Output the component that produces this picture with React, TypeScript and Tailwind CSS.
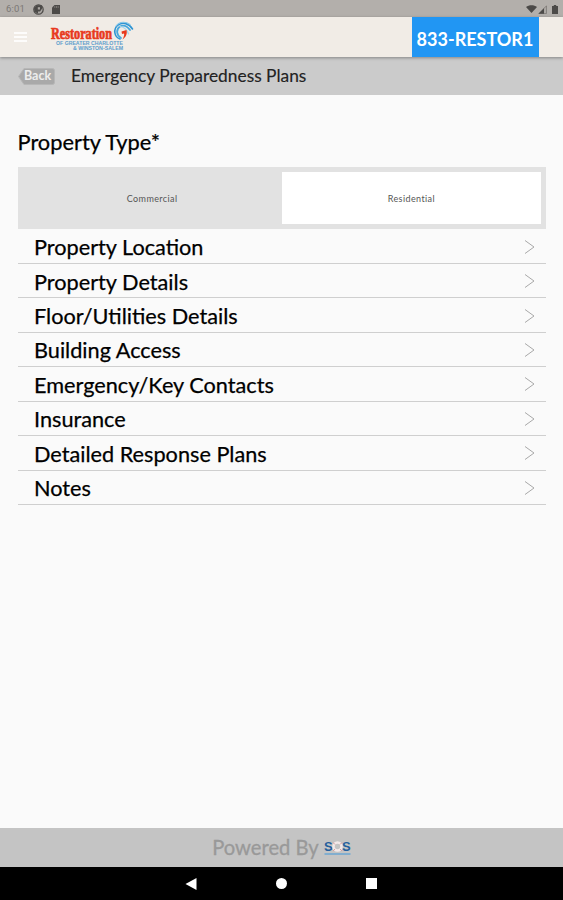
const sections = [
  "Property Location",
  "Property Details",
  "Floor/Utilities Details",
  "Building Access",
  "Emergency/Key Contacts",
  "Insurance",
  "Detailed Response Plans",
  "Notes",
]

function StatusBar() {
  return (
    <div className="flex h-[17px] shrink-0 items-center bg-[#b3afab] pt-[1px] pl-[6px] pr-[5px] text-[#4c4a48]">
      <span className="font-['Roboto',sans-serif] text-[9.5px] leading-none tracking-[0.2px] text-[#7b7875]">6:01</span>
      <svg className="ml-[8px]" width="11" height="11" viewBox="0 0 11 11">
        <circle cx="5.5" cy="5.5" r="4.7" fill="#aaa6a2" stroke="currentColor" strokeWidth="1.2" />
        <path d="M4 1.200h5v3.500L7 7.500H5V9.800L1.500 7.500L1 4z" fill="currentColor" />
        <path d="M4.800 3.200h2.200v2.300H4.800z" fill="#aaa6a2" />
      </svg>
      <svg className="ml-[8px]" width="8" height="9" viewBox="0 0 8 9">
        <path d="M2.5 0H8v9H0V2.5z" fill="currentColor" />
        <path d="M2.8 1.2v1.6M4.5 1.2v1.6M6.2 1.2v1.6" stroke="#98948f" strokeWidth="0.7" />
      </svg>
      <svg className="ml-auto" width="11" height="8" viewBox="0 0 11 8">
        <path d="M0 2C3-.5 8-.5 11 2L5.5 8z" fill="currentColor" />
      </svg>
      <svg className="ml-[1px]" width="9" height="9" viewBox="0 0 9 9">
        <path d="M8.5.8v7.7H.8z" fill="#aaa6a2" stroke="#6d6a67" strokeWidth="0.6" />
        <path d="M6 3.3v5.4H.5z" fill="currentColor" />
      </svg>
      <svg className="ml-[5px]" width="6" height="9" viewBox="0 0 6 9">
        <path d="M0 1h1.8V0h2.4v1H6v8H0z" fill="currentColor" />
      </svg>
    </div>
  )
}

function BrandLogo() {
  return (
    <svg className="ml-[22px]" width="86" height="32" viewBox="0 0 86 32">
      <text
        x="2"
        y="18"
        textLength="61"
        lengthAdjust="spacingAndGlyphs"
        fontFamily="Liberation Serif, serif"
        fontWeight="bold"
        fontSize="16"
        fill="#e8391d"
        stroke="#e8391d"
        strokeWidth="0.7"
      >
        Restoration
      </text>
      <g fill="none" strokeLinecap="round">
        <path d="M71 18C65 16 64 8 69 4C74 .5 80 2.500 83.500 8" stroke="#2e94d3" strokeWidth="1.600" />
        <path d="M72 17C67 14 67 8 71 5.500C75 3.500 78 5 81 9" stroke="#45a7dd" strokeWidth="1.800" />
        <path d="M67 5C71 0 77 .5 81 3.500" stroke="#84c6e8" strokeWidth="1.200" />
        <path d="M71 5.500C75 6 78 8 79.500 13" stroke="#a6d6ed" strokeWidth="1.200" />
      </g>
      <path d="M72.500 10.500L77.500 9C78.500 13 77 16 73.500 18.500C75 15.500 75.500 13.500 75 12.500L73 13z" fill="#e8391d" />
      <g fontFamily="Liberation Sans, sans-serif" fontWeight="bold" fontSize="4.500" fill="#5c9dcc">
        <text x="7" y="23.500" textLength="67" lengthAdjust="spacingAndGlyphs">
          OF GREATER CHARLOTTE
        </text>
        <text x="24" y="28.800" textLength="50" lengthAdjust="spacingAndGlyphs">
          &amp; WINSTON-SALEM
        </text>
      </g>
    </svg>
  )
}

function AppBar() {
  return (
    <header className="z-10 flex h-10 shrink-0 items-center bg-[#f1ece6] pl-[14px] pr-6 shadow-[0_1px_3px_rgba(0,0,0,0.35)]">
      <div className="flex w-[13px] flex-col gap-[2px]">
        <span className="h-[2px] bg-[#fdfcfb]" />
        <span className="h-[2px] bg-[#fdfcfb]" />
        <span className="h-[2px] bg-[#fdfcfb]" />
      </div>
      <BrandLogo />
      <button className="ml-auto flex h-10 w-[127px] items-center justify-center bg-[#2196f3] pt-[4px] pr-[1px] text-[18px] font-bold whitespace-nowrap text-white">
        833-RESTOR1
      </button>
    </header>
  )
}

function TitleBar() {
  return (
    <div className="flex h-[38px] shrink-0 items-center bg-[#cbcbcb] pl-[18px]">
      <button className="relative flex h-[17px] w-[37px] items-center justify-center">
        <svg className="absolute inset-0" width="37" height="17" viewBox="0 0 37 17">
          <path d="M6 .5H34.500Q36.500 .5 36.500 2.500V14.500Q36.500 16.500 34.500 16.500H6L.5 8.500z" fill="#a9a9a9" stroke="#b7b7b7" />
        </svg>
        <span className="relative pt-[1px] pl-[2px] text-[12.5px] leading-none font-bold text-[#ededed]">Back</span>
      </button>
      <h1 className="ml-4 text-[17.35px] leading-none text-[#222] [-webkit-text-stroke:0.15px]">
        Emergency Preparedness Plans
      </h1>
    </div>
  )
}

function PropertyType() {
  return (
    <div className="flex h-[62px] bg-[#e2e2e2] p-[5px] text-[9px] tracking-[0.4px] text-[#555]">
      <button className="flex-1 pt-[2px]">Commercial</button>
      <button className="flex-1 bg-white pt-[2px]">Residential</button>
    </div>
  )
}

export default function App() {
  return (
    <div className="flex h-[900px] w-full flex-col bg-[#fafafa] font-['Lato',sans-serif]">
      <StatusBar />
      <AppBar />
      <TitleBar />

      <main className="flex-1 pt-[33px] pr-[17px] pl-[17.5px]">
        <h2 className="mb-3 text-[21.8px] leading-[27px] text-black [-webkit-text-stroke:0.25px]">Property Type*</h2>
        <PropertyType />
        <ul className="pt-[0.6px]">
          {sections.map((section) => (
            <li
              key={section}
              className="flex h-[34.43px] items-center justify-between border-b border-[#cfcfcf] pr-[11.5px] pl-[16.5px] text-[21.7px] leading-none text-black [-webkit-text-stroke:0.25px]"
            >
              <span className="pt-[3.5px]">{section}</span>
              <svg className="mt-[1px]" width="11" height="14" viewBox="0 0 11 14" fill="none" stroke="#a8a8a8">
                <path d="M1 .5L10 7L1 13.500" />
              </svg>
            </li>
          ))}
        </ul>
      </main>

      <footer className="flex h-[39px] shrink-0 items-center justify-center bg-[#c4c4c4] text-[20.2px] text-[#999] [-webkit-text-stroke:0.3px]">
        <span>Powered By</span>
        <svg className="ml-[5px]" width="27" height="17" viewBox="0 0 27 17">
          <g fontFamily="Liberation Sans, sans-serif" fontWeight="bold" fontSize="13" fill="#245f9d">
            <text x="0" y="12">
              S
            </text>
            <text x="18" y="12">
              S
            </text>
          </g>
          <circle cx="13.500" cy="7.500" r="4" fill="#c4c4c4" stroke="#f3e9e9" strokeWidth="2.500" />
          <path d="M9 3.500l2 2M18 3.500l-2 2M9 12l2-2M18 12l-2-2" stroke="#dc9a9a" strokeWidth="1" />
          <path d="M.5 15H26.500" stroke="#5fa3d5" strokeWidth="1.300" />
        </svg>
      </footer>

      <nav className="flex h-[33px] shrink-0 items-center justify-center gap-[79px] bg-black pr-[2px]">
        <svg width="12" height="12" viewBox="0 0 12 12" fill="white">
          <path d="M11.500 0v12L.5 6z" />
        </svg>
        <svg width="11" height="11" viewBox="0 0 11 11" fill="white">
          <circle cx="5.500" cy="5.500" r="5.500" />
        </svg>
        <svg width="11" height="11" viewBox="0 0 11 11" fill="white">
          <rect width="11" height="11" />
        </svg>
      </nav>
    </div>
  )
}
